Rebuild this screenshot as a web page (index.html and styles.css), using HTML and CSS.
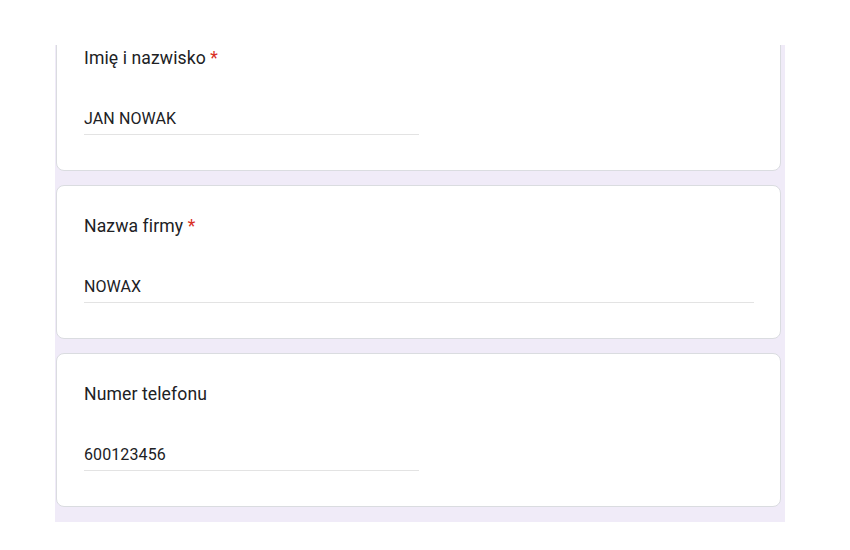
FILE: index.html
```html
<!DOCTYPE html>
<html lang="pl">
<head>
<meta charset="utf-8">
<title>Formularz</title>
<link rel="stylesheet" href="styles.css">
</head>
<body>
<div class="page">
  <div class="form-area">
    <div class="cards">
      <div class="card">
        <div class="label">Imię i nazwisko <span class="req">*</span></div>
        <div class="field half"><input class="input" type="text" value="JAN NOWAK" readonly></div>
      </div>
      <div class="card">
        <div class="label">Nazwa firmy <span class="req">*</span></div>
        <div class="field full"><input class="input" type="text" value="NOWAX" readonly></div>
      </div>
      <div class="card">
        <div class="label">Numer telefonu</div>
        <div class="field half"><input class="input" type="text" value="600123456" readonly></div>
      </div>
    </div>
  </div>
</div>
</body>
</html>
```
FILE: styles.css
```css
html, body {
  margin: 0;
  padding: 0;
  background: #ffffff;
  font-family: Roboto, "Liberation Sans", Arial, sans-serif;
}

.page {
  padding: 45px 0 0 55px;
}

.form-area {
  width: 725px;
  height: 477px;
  padding: 0 4px 0 1px;
  background: #f0ebf8;
  overflow: hidden;
}

.cards {
  display: flex;
  flex-direction: column;
  gap: 14px;
  margin-top: -28px;
}

.card {
  background: #ffffff;
  border: 1px solid #dadce0;
  border-radius: 8px;
  padding: 28px 26px 35px 27px;
}

.label {
  font-size: 17.6px;
  line-height: 24px;
  color: #202124;
  letter-spacing: 0.1px;
}

.req {
  color: #d93025;
}

.field {
  margin-top: 39px;
}

.field.half {
  width: 50%;
}

.field.full {
  width: 100%;
}

.input {
  display: block;
  box-sizing: content-box;
  width: 100%;
  height: 20px;
  margin: 0;
  padding: 0 0 5px 0;
  border: 0;
  border-bottom: 1px solid #e3e3e3;
  outline: none;
  background: transparent;
  font-family: Roboto, "Liberation Sans", Arial, sans-serif;
  font-size: 16px;
  line-height: 20px;
  letter-spacing: 0.1px;
  color: #202124;
}
```
